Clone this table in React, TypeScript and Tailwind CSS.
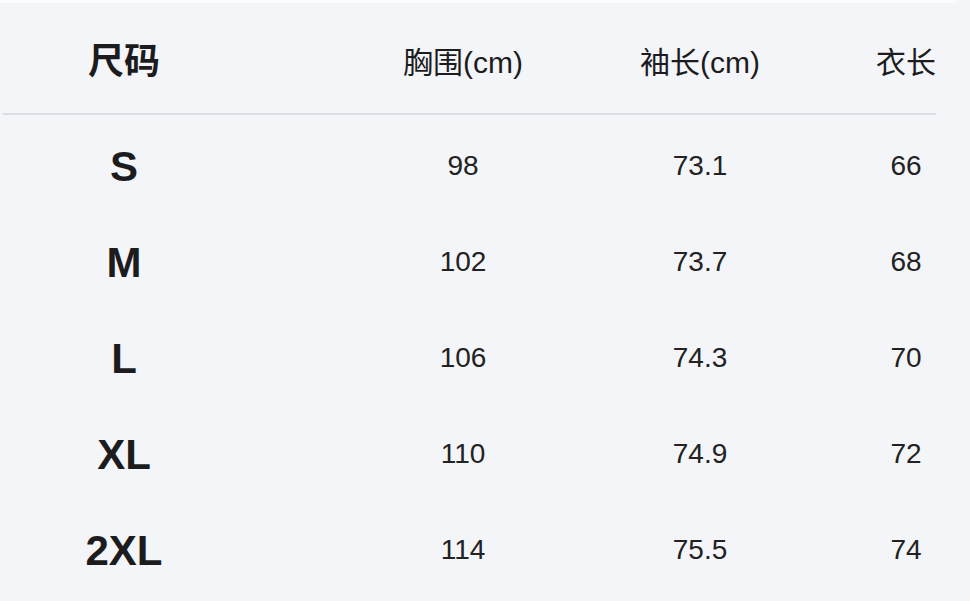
import React from 'react';

const rows = [
  { size: 'S', chest: '98', sleeve: '73.1', length: '66' },
  { size: 'M', chest: '102', sleeve: '73.7', length: '68' },
  { size: 'L', chest: '106', sleeve: '74.3', length: '70' },
  { size: 'XL', chest: '110', sleeve: '74.9', length: '72' },
  { size: '2XL', chest: '114', sleeve: '75.5', length: '74' },
];

const font = "font-['Liberation_Sans','Noto_Sans_CJK_SC',sans-serif]";

const App: React.FC = () => {
  return (
    <div className={`w-[970px] h-[601px] overflow-hidden bg-[#f4f5f8] ${font}`}>
      <div className="h-[3px] bg-[#fafbfc] rounded-tr-[14px] mr-[12px]" />

      {/* Header */}
      <div className="flex items-center h-[110px] pt-[8px] text-[#1c1c1e]">
        <div className="ml-[44px] w-[160px] text-center text-[36px] font-bold">尺码</div>
        <div className="ml-[179px] w-[160px] text-center text-[30px] whitespace-nowrap">胸围(cm)</div>
        <div className="ml-[77px] w-[160px] text-center text-[30px] whitespace-nowrap">袖长(cm)</div>
        <div className="ml-[66px] w-[120px] text-center text-[30px]">衣长</div>
      </div>
      <div className="ml-[3px] w-[933px] h-[2px] bg-[#dcdde2]" />

      {/* Rows */}
      <div className="flex flex-col pt-[3px]">
        {rows.map((r) => (
          <div key={r.size} className="flex items-center h-[96px] text-[#1c1c1e]">
            <div className="ml-[44px] w-[160px] text-center text-[42px] font-bold">{r.size}</div>
            <div className="ml-[179px] w-[160px] text-center text-[28px] text-[#222]">{r.chest}</div>
            <div className="ml-[77px] w-[160px] text-center text-[28px] text-[#222]">{r.sleeve}</div>
            <div className="ml-[66px] w-[120px] text-center text-[28px] text-[#222]">{r.length}</div>
          </div>
        ))}
      </div>
    </div>
  );
};

export default App;
